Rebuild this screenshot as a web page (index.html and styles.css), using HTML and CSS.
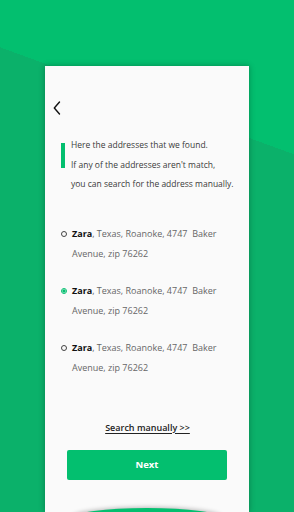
FILE: index.html
```html
<!DOCTYPE html>
<html lang="en">
<head>
  <meta charset="UTF-8">
  <title>Choose address</title>
  <link rel="stylesheet" href="styles.css">
</head>
<body>

  <div class="card">
    <button class="back" aria-label="Back">
      <svg width="8" height="14" viewBox="0 0 8 14">
        <path d="M6.5 1 L1.3 7 L6.5 13" fill="none" stroke="#111" stroke-width="1.4" stroke-linecap="round" stroke-linejoin="round"/>
      </svg>
    </button>

    <div class="note">
      <span class="note-bar"></span>
      <p>Here the addresses that we found.<br>
        If any of the addresses aren't match,<br>
        you can search for the address manually.</p>
    </div>

    <ul class="address-list">
      <li class="address">
        <span class="radio"></span>
        <span class="address-text"><b>Zara</b>, Texas, Roanoke, 4747&nbsp; Baker<br>Avenue, zip 76262</span>
      </li>
      <li class="address selected">
        <span class="radio"></span>
        <span class="address-text"><b>Zara</b>, Texas, Roanoke, 4747&nbsp; Baker<br>Avenue, zip 76262</span>
      </li>
      <li class="address">
        <span class="radio"></span>
        <span class="address-text"><b>Zara</b>, Texas, Roanoke, 4747&nbsp; Baker<br>Avenue, zip 76262</span>
      </li>
    </ul>

    <a class="search-link" href="#">Search manually &gt;&gt;</a>

    <button class="next-btn">Next</button>

    <div class="arc"></div>
  </div>

</body>
</html>
```

FILE: styles.css
```css
body {
  margin: 0;
  height: 512px;
  overflow: hidden;
  font-family: "Open Sans", Arial, sans-serif;
  background: linear-gradient(200deg, #03bf6f 145px, #0bb16a 145px);
}

.card {
  position: relative;
  box-sizing: border-box;
  width: 204px;
  height: 446px;
  margin: 66px auto 0;
  padding: 35px 10px 0 16px;
  background-color: #fafafa;
  box-shadow: 0 0 6px rgba(0, 0, 0, 0.3);
  overflow: hidden;
  display: flex;
  flex-direction: column;
}

.back {
  align-self: flex-start;
  margin-left: -8px;
  padding: 0;
  border: none;
  background: none;
  line-height: 0;
  cursor: pointer;
}

.note {
  display: flex;
  gap: 6px;
  margin-top: 20px;
}

.note-bar {
  flex: none;
  width: 4px;
  height: 25px;
  margin-top: 8px;
  background-color: #03bf6f;
}

.note p {
  margin: 0;
  font-size: 8.5px;
  line-height: 19.5px;
  color: #3a3a3a;
  white-space: nowrap;
}

.address-list {
  list-style: none;
  margin: 30px 0 0;
  padding: 0;
}

.address {
  display: flex;
  gap: 5px;
  margin-bottom: 17px;
}

.radio {
  flex: none;
  box-sizing: border-box;
  width: 6px;
  height: 6px;
  margin-top: 7px;
  border: 1px solid #444;
  border-radius: 50%;
}

.selected .radio {
  border-color: #03bf6f;
  background: radial-gradient(circle, #03bf6f 1.4px, #fafafa 1.8px);
}

.address-text {
  font-size: 9px;
  line-height: 20px;
  color: #666;
  white-space: nowrap;
}

.address-text b {
  color: #111;
  font-weight: 700;
}

.search-link {
  align-self: center;
  margin-top: 26px;
  margin-left: -5px;
  font-size: 9px;
  font-weight: 600;
  line-height: 14px;
  color: #222;
  text-decoration: underline;
  text-underline-offset: 2px;
}

.next-btn {
  align-self: center;
  width: 160px;
  height: 30px;
  margin-top: 15px;
  margin-left: -6px;
  border: none;
  border-radius: 2px;
  background-color: #03bf6f;
  color: white;
  font-family: inherit;
  font-size: 9.5px;
  font-weight: 700;
  cursor: pointer;
}

.arc {
  position: absolute;
  left: 27px;
  bottom: -16px;
  width: 150px;
  height: 20px;
  border-radius: 50%;
  background-color: #03bf6f;
  box-shadow: 0 -1px 4px rgba(0, 0, 0, 0.25);
}
```
